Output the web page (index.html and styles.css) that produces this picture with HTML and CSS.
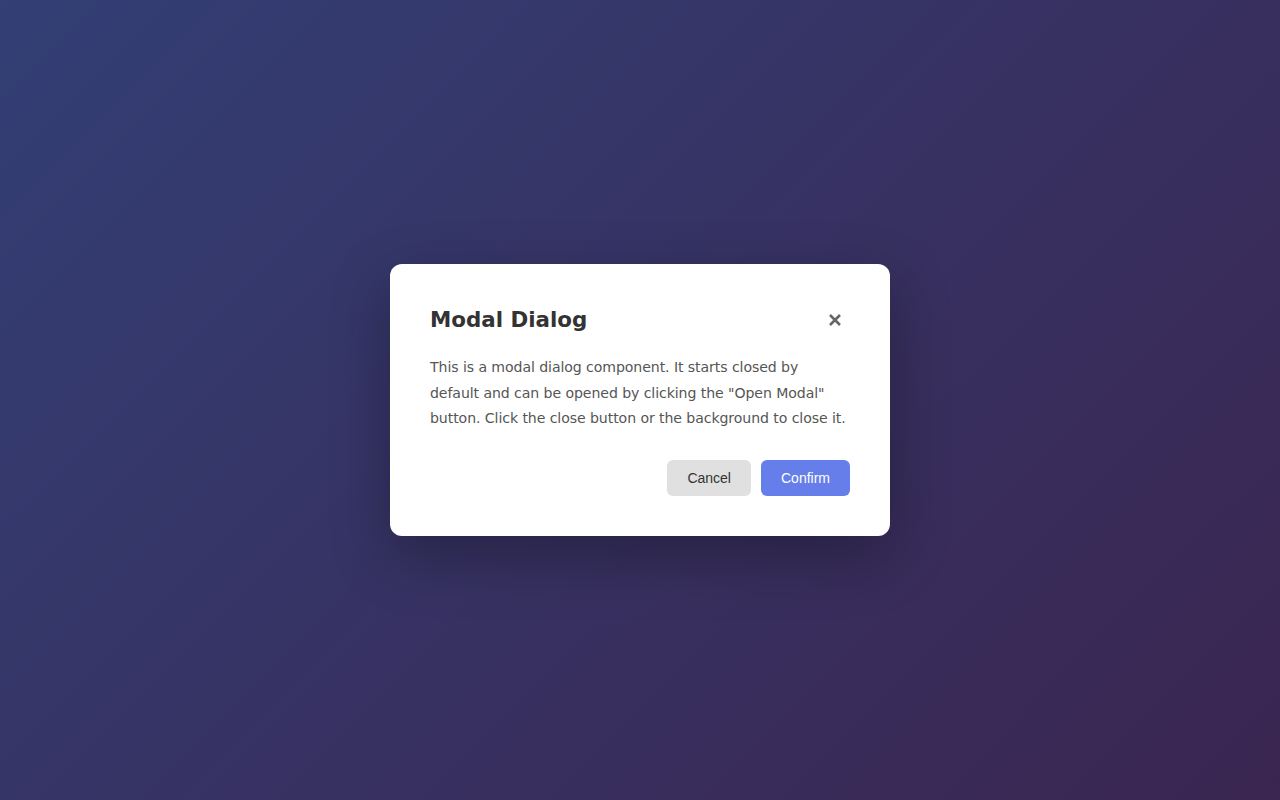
FILE: index.html
```html
<!DOCTYPE html>
<html>
<head>
<meta charset="utf-8">
<link rel="stylesheet" href="styles.css">
</head>
<body>
<div class="page">
  <div class="overlay">
    <div class="modal">
      <div class="modal-header">
        <h2 class="modal-title">Modal Dialog</h2>
        <button class="close-btn" aria-label="Close">
          <svg width="14" height="14" viewBox="0 0 14 14"><path d="M2 2 L12 12 M12 2 L2 12" stroke="#666" stroke-width="2.6" stroke-linecap="butt"/></svg>
        </button>
      </div>
      <p class="modal-body">This is a modal dialog component. It starts closed by<br>default and can be opened by clicking the "Open Modal"<br>button. Click the close button or the background to close it.</p>
      <div class="modal-footer">
        <button class="btn btn-cancel">Cancel</button>
        <button class="btn btn-confirm">Confirm</button>
      </div>
    </div>
  </div>
</div>
</body>
</html>
```
FILE: styles.css
```css
html, body {
  margin: 0;
  padding: 0;
  height: 100%;
}
.page {
  height: 100vh;
  background: linear-gradient(135deg, #667eea 0%, #764ba2 100%);
  font-family: "DejaVu Sans", Verdana, sans-serif;
}
.overlay {
  height: 100%;
  background: rgba(0, 0, 0, 0.5);
  display: flex;
  align-items: center;
  justify-content: center;
}
.modal {
  width: 500px;
  box-sizing: border-box;
  padding: 41px 40px 40px;
  background: #fff;
  border-radius: 12px;
  box-shadow: 0 20px 60px rgba(0, 0, 0, 0.3);
}
.modal-header {
  display: flex;
  align-items: center;
  justify-content: space-between;
  margin-bottom: 20px;
}
.modal-title {
  margin: 0;
  font-size: 21.4px;
  font-weight: bold;
  color: #333;
  line-height: 30px;
}
.close-btn {
  background: none;
  border: none;
  padding: 0;
  width: 31px;
  height: 30px;
  display: flex;
  align-items: center;
  justify-content: center;
  cursor: pointer;
}
.modal-body {
  margin: 0 -4px 28px 0;
  font-size: 14.1px;
  letter-spacing: -0.08px;
  line-height: 25.5px;
  color: #555;
}
.modal-footer {
  display: flex;
  justify-content: flex-end;
  gap: 10px;
}
.btn {
  font-family: "Liberation Sans", Arial, sans-serif;
  font-size: 14px;
  height: 36px;
  padding: 0 20px;
  border: none;
  border-radius: 6px;
  cursor: pointer;
}
.btn-cancel {
  background: #e0e0e0;
  color: #333;
}
.btn-confirm {
  background: #667eea;
  color: #fff;
}
```
